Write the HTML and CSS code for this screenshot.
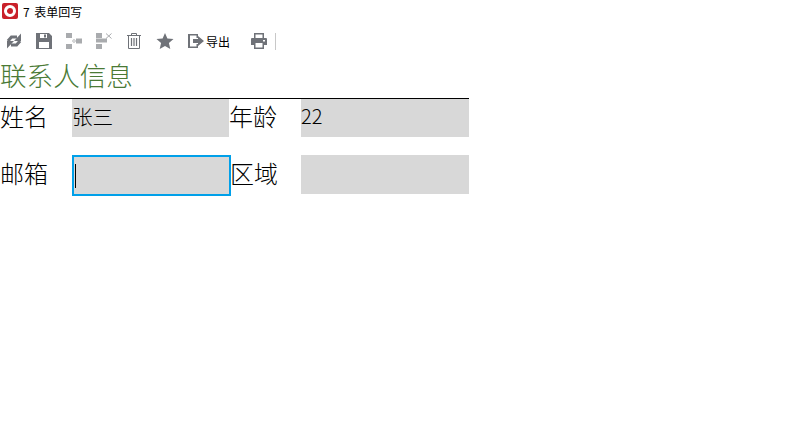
FILE: index.html
```html
<!DOCTYPE html>
<html lang="zh-CN">
<head>
    <meta charset="UTF-8">
    <title>7 表单回写</title>
    <link rel="stylesheet" href="styles.css">
</head>
<body>
    <div class="titlebar">
        <svg class="logo" width="18" height="18" viewBox="0 0 18 18">
            <rect x="1" y="1" width="16" height="16" rx="2" fill="#c9202a"/>
            <circle cx="9" cy="9" r="4.5" fill="none" stroke="#fff" stroke-width="3"/>
        </svg>
        <span class="app-title">7 表单回写</span>
    </div>

    <div class="toolbar">
        <svg class="tool" width="16" height="16" viewBox="0 0 16 16" fill="#6f7278">
            <path d="M2 8 L5.5 4 H11" fill="none" stroke="#6f7278" stroke-width="3.2"/>
            <path d="M15 0.5 V8 H8 Z"/>
            <path d="M14 8 L10.5 12 H5" fill="none" stroke="#6f7278" stroke-width="3.2"/>
            <path d="M1 15.5 V8 H8 Z"/>
        </svg>
        <svg class="tool" width="16" height="16" viewBox="0 0 16 16" fill="#6f7278">
            <path fill-rule="evenodd" d="M0 0 H13 L16 3 V16 H0 Z M4 1 V5 H11 V1 Z M3 9 V15 H13 V9 Z"/>
            <rect x="8" y="1.5" width="2" height="3"/>
        </svg>
        <svg class="tool" width="16" height="16" viewBox="0 0 16 16" fill="#a9abae">
            <rect x="0" y="0" width="6" height="5"/>
            <rect x="0" y="11" width="6" height="5"/>
            <rect x="10" y="5.5" width="6" height="5"/>
            <path d="M6 7.5 H10 V8.5 H6 Z M7.5 6 V10 H8.5 V6 Z"/>
        </svg>
        <svg class="tool" width="16" height="16" viewBox="0 0 16 16" fill="#a9abae">
            <rect x="0" y="0" width="6" height="5"/>
            <rect x="0" y="11" width="6" height="5"/>
            <rect x="0" y="5.5" width="11" height="4"/>
            <path d="M10 0.5 L15.5 5.5 M15.5 0.5 L10 5.5" stroke="#a9abae" fill="none"/>
        </svg>
        <svg class="tool" width="16" height="16" viewBox="0 0 16 16" fill="none" stroke="#6f7278">
            <path d="M1 2.5 H15 M5.5 2.5 V0.5 H10.5 V2.5"/>
            <path d="M2.5 2.5 V15.5 H13.5 V2.5"/>
            <path d="M5.5 5 V13 M8 5 V13 M10.5 5 V13" stroke-width="1.2"/>
        </svg>
        <svg class="tool" width="18" height="16" viewBox="0 0 18 16" fill="#6f7278">
            <path d="M9 0 L11.4 5.4 L17.5 6 L12.9 10 L14.3 16 L9 12.9 L3.7 16 L5.1 10 L0.5 6 L6.6 5.4 Z"/>
        </svg>
        <div class="tool export">
            <svg width="16" height="16" viewBox="0 0 16 16" fill="#6f7278">
                <path d="M0 1 H10 V5 H8.5 V2.5 H2 V13.5 H8.5 V11 H10 V15 H0 Z"/>
                <path d="M5 6 H10 V3 L16 8 L10 13 V10 H5 Z"/>
            </svg>
            <span>导出</span>
        </div>
        <svg class="tool printer" width="18" height="16" viewBox="0 0 18 16" fill="#6f7278">
            <path fill-rule="evenodd" d="M4 0 H14 V5 H12.5 V1.5 H5.5 V5 H4 Z"/>
            <path fill-rule="evenodd" d="M2 5 H16 Q17 5 17 6 V12 H14 V16 H4 V12 H1 V6 Q1 5 2 5 Z M5.5 10 V14.5 H12.5 V10 Z M13 7 V8.5 H15 V7 Z"/>
        </svg>
        <div class="divider"></div>
    </div>

    <div class="form">
        <h1>联系人信息</h1>
        <div class="row">
            <label class="label">姓名</label>
            <div class="field name-field">张三</div>
            <label class="label">年龄</label>
            <div class="field side-field">22</div>
        </div>
        <div class="row row-second">
            <label class="label">邮箱</label>
            <div class="field focus-field"><span class="caret"></span></div>
            <label class="label label-after-focus">区域</label>
            <div class="field side-field"></div>
        </div>
    </div>
</body>
</html>
```

FILE: styles.css
```css
/* Page */
body {
    margin: 0;
    background: #ffffff;
    color: #000000;
    font-family: "Noto Sans CJK SC", "Liberation Sans", sans-serif;
}

/* Title bar */
.titlebar {
    display: flex;
    align-items: center;
    gap: 4px;
    height: 22px;
    padding-left: 1px;
    font-size: 12px;
}

.app-title {
    word-spacing: 2px;
}

/* Toolbar */
.toolbar {
    display: flex;
    align-items: center;
    height: 22px;
    margin-top: 8px;
    padding-left: 6px;
}

.tool {
    flex: none;
    margin-right: 14px;
}

.export {
    display: flex;
    align-items: center;
    margin-right: 20px;
    font-size: 12px;
}

.export span {
    margin-left: 2px;
}

.printer {
    margin-right: 7px;
}

.divider {
    width: 1px;
    height: 17px;
    background: #c8c8c8;
}

/* Form */
.form {
    width: 469px;
}

h1 {
    margin: 0;
    height: 47px;
    box-sizing: border-box;
    padding-top: 5px;
    border-bottom: 1px solid #000000;
    color: #4a7a35;
    font-size: 26.6px;
    font-weight: 300;
    line-height: 36px;
}

.row {
    display: flex;
    align-items: flex-start;
    font-size: 24px;
}

.row-second {
    margin-top: 18px;
}

.label {
    flex: none;
    width: 72px;
    height: 38px;
    box-sizing: border-box;
    font-weight: 300;
    line-height: 33px;
}

.row-second .label {
    line-height: 36px;
}

.label-after-focus {
    width: 71px;
    margin-left: -1px;
}

.field {
    flex: none;
    box-sizing: border-box;
    height: 38px;
    background: #d8d8d8;
    font-size: 20px;
    font-weight: 300;
    line-height: 34px;
}

.name-field {
    width: 157px;
    font-size: 20.6px;
}

.side-field {
    width: 168px;
}

.row-second .side-field {
    height: 39px;
}

.focus-field {
    display: flex;
    align-items: center;
    width: 159px;
    height: 41px;
    padding-left: 1px;
    border: 2px solid #00a0e9;
}

.caret {
    width: 1px;
    height: 24px;
    background: #000000;
}
```
